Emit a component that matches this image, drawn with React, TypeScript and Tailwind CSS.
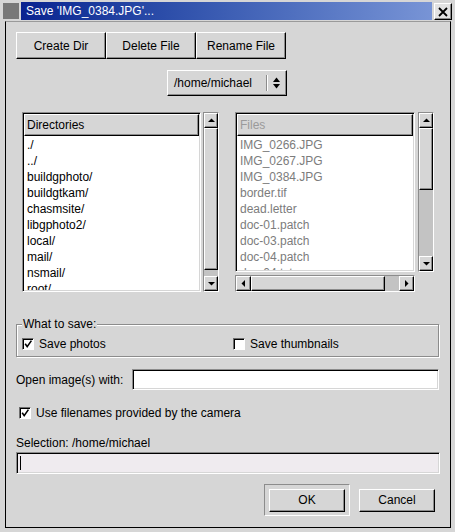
import React from 'react'

const raised =
  'border border-t-white border-l-white border-r-black border-b-black shadow-[inset_-1px_-1px_0_#8c8c8c]'
const sunken =
  'border border-t-[#8c8c8c] border-l-[#8c8c8c] border-r-white border-b-white shadow-[inset_1px_1px_0_#000,inset_-1px_-1px_0_#d6d6d6]'
const trough = 'border border-t-[#8c8c8c] border-l-[#8c8c8c] border-r-white border-b-white bg-[#c3c3c3]'

const DIRS = ['./', '../', 'buildgphoto/', 'buildgtkam/', 'chasmsite/', 'libgphoto2/', 'local/', 'mail/', 'nsmail/', 'root/']
const FILES = [
  'IMG_0266.JPG',
  'IMG_0267.JPG',
  'IMG_0384.JPG',
  'border.tif',
  'dead.letter',
  'doc-01.patch',
  'doc-03.patch',
  'doc-04.patch',
  'doc-04.txt',
]

type Dir = 'up' | 'down' | 'left' | 'right'

const TRI: Record<Dir, string> = {
  up: '0,5 7,5 3.5,1.5',
  down: '0,2 7,2 3.5,5.5',
  left: '5,0 5,7 1.5,3.5',
  right: '2,0 2,7 5.5,3.5',
}

function Tri({ dir }: { dir: Dir }) {
  return (
    <svg width="7" height="7" viewBox="0 0 7 7">
      <polygon points={TRI[dir]} fill="#000" />
    </svg>
  )
}

function ArrowBtn({ dir, className }: { dir: Dir; className: string }) {
  return (
    <div className={`${raised} bg-[#d6d6d6] flex items-center justify-center shrink-0 ${className}`}>
      <Tri dir={dir} />
    </div>
  )
}

function Button({ label, className }: { label: string; className: string }) {
  return <div className={`${raised} bg-[#d6d6d6] flex items-center justify-center ${className}`}>{label}</div>
}

function Check({ checked }: { checked: boolean }) {
  return (
    <div className="w-[12px] h-[12px] shrink-0 bg-white border border-t-[#6e6e6e] border-l-[#6e6e6e] border-r-white border-b-white shadow-[inset_1px_1px_0_#000] flex items-center justify-center">
      {checked && (
        <svg width="10" height="10" viewBox="0 0 10 10">
          <path d="M2.2 4.8 L4.2 7.6 L8.4 1.6" stroke="#000" strokeWidth="1.6" fill="none" />
        </svg>
      )}
    </div>
  )
}

function List({ title, items, dim, className }: { title: string; items: string[]; dim?: boolean; className: string }) {
  return (
    <div className={`${sunken} bg-white p-[1px] overflow-hidden flex flex-col ${className}`}>
      <div className={`${raised} bg-[#d6d6d6] h-[22px] shrink-0 flex items-center pl-[2px] ${dim ? 'text-[#9a9a9a]' : ''}`}>
        {title}
      </div>
      <div className={`pl-[3px] pt-[1px] overflow-hidden ${dim ? 'text-[#7c7c7c]' : ''}`}>
        {items.map((it) => (
          <div key={it} className="h-[16px] flex items-center whitespace-nowrap">
            {it}
          </div>
        ))}
      </div>
    </div>
  )
}

export default function App() {
  return (
    <div className="w-[455px] h-[532px] bg-[#d6d6d6] text-[12px] leading-[14px] text-black font-['Liberation_Sans',Arial,sans-serif] flex flex-col overflow-hidden">
      {/* title bar */}
      <div className="h-[21px] flex items-start shrink-0">
        <div className="w-[21px] h-[21px] pl-[3px] pt-[3px]">
          <svg width="16" height="16" viewBox="0 0 16 16">
            <rect x="0" y="0" width="16" height="16" fill="#f0f0f0" />
            {[0, 2, 4, 6, 8, 10, 12, 14].map((y) => (
              <rect key={y} x="0" y={y + 0.5} width="16" height="1" fill="#000" />
            ))}
          </svg>
        </div>
        <div className="mt-[2px] h-[18px] w-[411px] bg-gradient-to-r from-[#0a2290] to-[#7894d6] flex items-center pl-[5px] text-white">
          Save 'IMG_0384.JPG'...
        </div>
        <div className={`${raised} ml-[2px] mt-[3px] w-[18px] h-[17px] bg-[#e2e2e2] flex items-center justify-center`}>
          <svg width="10" height="10" viewBox="0 0 10 10">
            <path d="M1 1 L9 9 M9 1 L1 9" stroke="#000" strokeWidth="1.8" />
          </svg>
        </div>
      </div>

      {/* dialog body */}
      <div className="ml-[5px] w-[446px] h-[507px] border border-black border-t-[#9a9a9a] px-[10px] pt-[10px] flex flex-col">
        <div className="flex h-[27px]">
          <Button label="Create Dir" className="w-[90px] h-[27px]" />
          <Button label="Delete File" className="w-[90px] h-[27px]" />
          <Button label="Rename File" className="w-[90px] h-[27px]" />
        </div>

        <div className={`${raised} bg-[#d6d6d6] mt-[11px] ml-[151px] w-[120px] h-[26px] flex items-center`}>
          <span className="pl-[6px] flex-1">/home/michael</span>
          <div className="w-[1px] h-[16px] bg-[#8c8c8c]" />
          <div className="w-[1px] h-[16px] bg-white mr-[5px]" />
          <svg width="7" height="14" viewBox="0 0 7 14" className="mr-[6px]">
            <polygon points="0,6 7,6 3.5,1.5" fill="#000" />
            <polygon points="0,8 7,8 3.5,12.5" fill="#000" />
          </svg>
        </div>

        {/* lists */}
        <div className="mt-[16px] ml-[6px] h-[180px] flex">
          <List title="Directories" items={DIRS} className="w-[179px] h-[180px]" />
          <div className={`${trough} ml-[2px] w-[16px] h-[180px] flex flex-col`}>
            <ArrowBtn dir="up" className="h-[15px] w-full" />
            <div className={`${raised} bg-[#d6d6d6] h-[142px] shrink-0`} />
            <div className="flex-1" />
            <ArrowBtn dir="down" className="h-[15px] w-full" />
          </div>

          <div className="ml-[16px] flex flex-col">
            <div className="flex">
              <List title="Files" items={FILES} dim className="w-[180px] h-[160px]" />
              <div className={`${trough} ml-[3px] w-[16px] h-[160px] flex flex-col`}>
                <ArrowBtn dir="up" className="h-[15px] w-full" />
                <div className={`${raised} bg-[#d6d6d6] h-[62px] shrink-0`} />
                <div className="flex-1" />
                <ArrowBtn dir="down" className="h-[15px] w-full" />
              </div>
            </div>
            <div className={`${trough} mt-[3px] w-[180px] h-[17px] flex`}>
              <ArrowBtn dir="left" className="w-[15px] h-full" />
              <div className={`${raised} bg-[#d6d6d6] w-[134px] shrink-0`} />
              <div className="flex-1" />
              <ArrowBtn dir="right" className="w-[15px] h-full" />
            </div>
          </div>
        </div>

        {/* what to save */}
        <div className="mt-[32px] h-[33px] w-[423px] border border-[#8c8c8c] shadow-[inset_1px_1px_0_#fff,1px_1px_0_#fff] px-[5px]">
          <div className="-mt-[8px] h-[14px] w-fit px-[1px] bg-[#d6d6d6]">What to save:</div>
          <div className="mt-[6px] h-[14px] flex items-center">
            <div className="w-[211px] flex items-center gap-[5px]">
              <Check checked />
              <span>Save photos</span>
            </div>
            <div className="flex items-center gap-[5px]">
              <Check checked={false} />
              <span>Save thumbnails</span>
            </div>
          </div>
        </div>

        <div className="mt-[12px] h-[21px] flex items-center">
          <span className="w-[116px] shrink-0">Open image(s) with:</span>
          <div className={`${sunken} bg-white flex-1 h-[21px] mr-[1px]`} />
        </div>

        <div className="mt-[16px] ml-[3px] h-[14px] flex items-center gap-[5px]">
          <Check checked />
          <span>Use filenames provided by the camera</span>
        </div>

        <div className="mt-[16px] h-[14px]">Selection: /home/michael</div>
        <div className={`${sunken} mt-[2px] h-[22px] bg-[#efebef] flex items-center pl-[3px]`}>
          <div className="w-[1px] h-[14px] bg-black" />
        </div>

        <div className="mt-[10px] h-[32px] flex justify-end items-center gap-[9px] pr-[5px]">
          <div className="w-[86px] h-[32px] border border-t-[#8c8c8c] border-l-[#8c8c8c] border-r-white border-b-white flex items-center justify-center">
            <Button label="OK" className="w-[76px] h-[23px]" />
          </div>
          <Button label="Cancel" className="w-[76px] h-[23px]" />
        </div>
      </div>
    </div>
  )
}
